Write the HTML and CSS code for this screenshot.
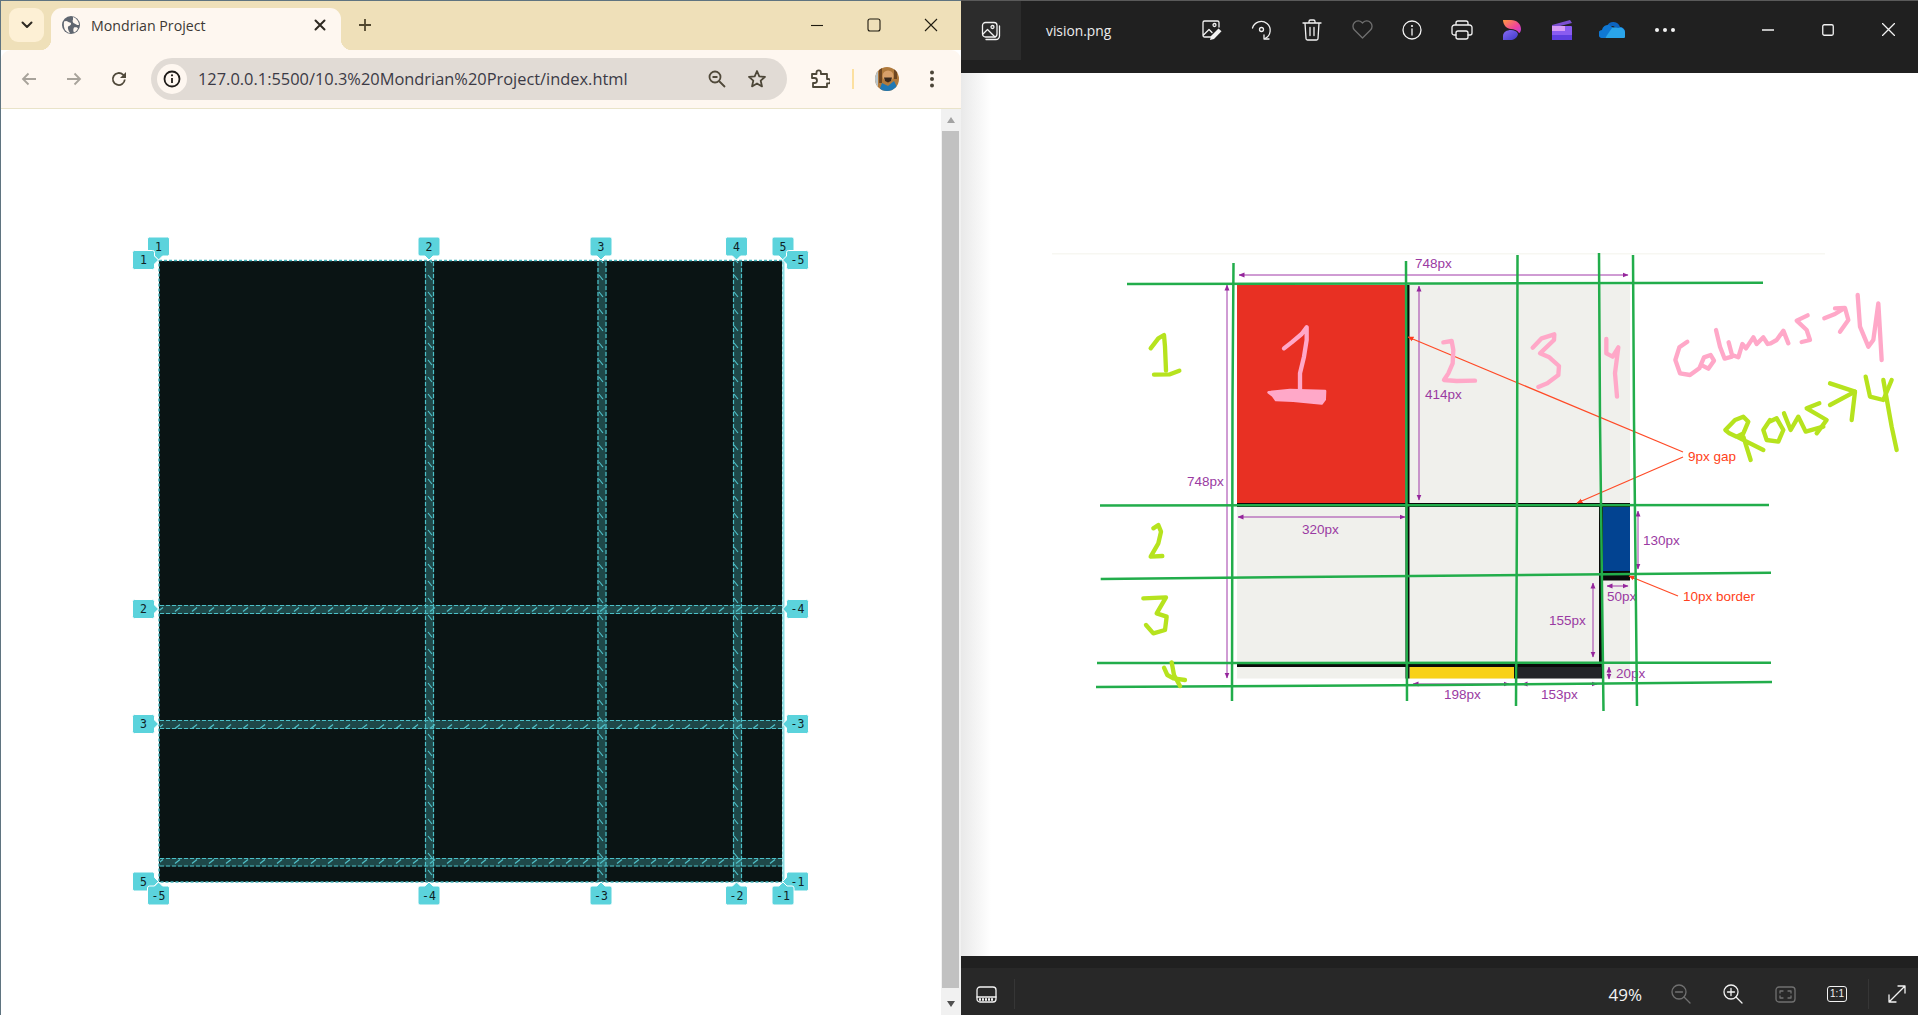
FILE: index.html
```html
<!DOCTYPE html>
<html lang="en">
<head>
<meta charset="utf-8">
<title>Mondrian Project</title>
<link rel="stylesheet" href="styles.css">
</head>
<body>
<div class="screen">

<section class="browser">
  <header class="tabstrip">
    <div class="tab-search"><svg width="12" height="8" viewBox="0 0 12 8"><path class="ic-bold" d="M1.500 1.500 6 6l4.500-4.500"/></svg></div>
    <div class="tab">
      <svg class="favicon" width="18" height="18" viewBox="0 0 18 18"><circle class="globe" cx="9" cy="9" r="9"/><path class="globe-land" d="M2 5.500C5 4 6 6 8 6.500s1 3-1 3.500-1 4 1 7C4 16.500 1 13 2 5.500zM11 1c3 1 6 4 6 8-2 .5-3-1-4.500-1.500S10 5 11 3.500zM12 11.500c2-.5 3.500 0 4 1-1 2-2 3-4 4-1-1.500-1-3.500 0-5z"/></svg>
      <span class="tab-title">Mondrian Project</span>
      <svg class="tab-close" width="12" height="12" viewBox="0 0 12 12"><path class="ic-bold" d="M1.500 1.500l9 9m0-9l-9 9"/></svg>
    </div>
    <svg class="new-tab" width="14" height="14" viewBox="0 0 14 14"><path class="ic-plus" d="M7 1v12M1 7h12"/></svg>
    <div class="caption">
      <div class="caption-btn"><svg width="14" height="14" viewBox="0 0 14 14"><path class="ic-thin" d="M1 7.500h12"/></svg></div>
      <div class="caption-btn"><svg width="14" height="14" viewBox="0 0 14 14"><rect class="ic-thin" x="1" y="1" width="12" height="12" rx="2"/></svg></div>
      <div class="caption-btn"><svg width="14" height="14" viewBox="0 0 14 14"><path class="ic-thin" d="M1 1l12 12m0-12L1 13"/></svg></div>
    </div>
  </header>

  <nav class="toolbar">
    <div class="nav-btn"><svg width="16" height="14" viewBox="0 0 16 14"><path class="ic-nav dim" d="M15 7H2M7.500 1.500 2 7l5.500 5.500"/></svg></div>
    <div class="nav-btn"><svg width="16" height="14" viewBox="0 0 16 14"><path class="ic-nav dim" d="M1 7h13M8.500 1.500 14 7l-5.500 5.500"/></svg></div>
    <div class="nav-btn"><svg width="16" height="16" viewBox="0 0 16 16"><path class="ic-nav" d="M13.800 8.500A6 6 0 1 1 12 3.700L14 5.500"/><path class="ic-solid" d="M15 1v6H9z"/></svg></div>
    <div class="omnibox">
      <div class="site-info"><svg width="18" height="18" viewBox="0 0 18 18"><circle class="ic-info" cx="9" cy="9" r="7.500"/><path class="ic-info" d="M9 8v5"/><circle class="ic-dot" cx="9" cy="5.300" r="1.100"/></svg></div>
      <span class="url">127.0.0.1:5500/10.3%20Mondrian%20Project/index.html</span>
      <div class="omni-actions">
        <div class="omni-btn"><svg width="18" height="18" viewBox="0 0 18 18"><circle class="ic-nav" cx="7" cy="7" r="5.500"/><path class="ic-nav" d="M4.500 7h5M11 11l6 6"/></svg></div>
        <div class="omni-btn"><svg width="20" height="20" viewBox="0 0 20 20"><path class="ic-star" d="M10 2l2.300 5.400 5.700.5-4.300 3.800 1.300 5.700L10 14.400l-5 3 1.300-5.700L2 7.900l5.700-.5z"/></svg></div>
      </div>
    </div>
    <div class="ext-btn"><svg width="20" height="20" viewBox="0 0 20 20"><path class="ic-star" d="M2 5h4.500V3.500a2.200 2.200 0 0 1 4.400 0V5H17v5h1.300a2.200 2.200 0 0 1 0 4.400H17V18H3v-4h1.500a2.500 2.500 0 0 0 0-5H2z"/></svg></div>
    <div class="separator"></div>
    <svg class="avatar" width="24" height="24" viewBox="0 0 24 24"><defs><clipPath id="av"><circle cx="12" cy="12" r="12"/></clipPath></defs><g clip-path="url(#av)"><rect class="av-bg" width="24" height="24"/><rect class="av-side" width="3" height="24"/><rect class="av-stripe" x="4" width="3" height="16"/><rect class="av-stripe" x="19" width="3" height="12"/><circle class="av-face" cx="13" cy="9" r="5.500"/><path class="av-beard" d="M9 10.500h8l-1 3.500-3 1.500-3-1.500z"/><path class="av-shirt" d="M4 24l3-8 6 3 6-5 5 10z"/></g></svg>
    <div class="menu-btn"><svg width="6" height="18" viewBox="0 0 6 18"><circle class="ic-dot2" cx="3" cy="2.500" r="2"/><circle class="ic-dot2" cx="3" cy="9" r="2"/><circle class="ic-dot2" cx="3" cy="15.500" r="2"/></svg></div>
  </nav>

  <div class="viewport">
    <main class="page">
      <svg class="inspector" width="920" height="906" viewBox="1 109 920 906">
        <defs>
          <pattern id="hatch-h" patternUnits="userSpaceOnUse" width="17" height="9" y="605"><path class="hatch" d="M5 6.500 10 2.500"/></pattern>
          <pattern id="hatch-v" patternUnits="userSpaceOnUse" width="9" height="17" x="425"><path class="hatch" d="M3 3 7 8"/></pattern>
          <path id="b-top" d="M-9-9.500H9a2 2 0 0 1 2 2V7.500a2 2 0 0 1-2 2H4L0 13.500-4 9.500H-9a2 2 0 0 1-2-2V-7.500a2 2 0 0 1 2-2Z"/>
          <path id="b-bottom" d="M-9 9.500H9a2 2 0 0 0 2-2V-7.500a2 2 0 0 0-2-2H4L0-13.500-4-9.500H-9a2 2 0 0 0-2 2V7.500a2 2 0 0 0 2 2Z"/>
          <path id="b-left" d="M-11-7.500a2 2 0 0 1 2-2H9a2 2 0 0 1 2 2V-4L15 0 11 4V7.500a2 2 0 0 1-2 2H-9a2 2 0 0 1-2-2Z"/>
          <path id="b-right" d="M11-7.500a2 2 0 0 0-2-2H-9a2 2 0 0 0-2 2V-4L-15 0-11 4V7.500a2 2 0 0 0 2 2H9a2 2 0 0 0 2-2Z"/>
        </defs>
        <rect class="grid-bg" x="159" y="261" width="623" height="621"/>
        <g class="gap-fill">
          <rect x="425" y="261" width="9" height="621"/><rect x="597.500" y="261" width="9" height="621"/><rect x="733" y="261" width="9" height="621"/>
          <rect x="160" y="605" width="622" height="9"/><rect x="160" y="720" width="622" height="9"/><rect x="160" y="858" width="622" height="8.500"/>
        </g>
        <g class="hatch-v">
          <rect x="425" y="261" width="9" height="621"/><rect x="597.500" y="261" width="9" height="621"/><rect x="733" y="261" width="9" height="621"/>
        </g>
        <g class="hatch-h">
          <rect x="160" y="605" width="622" height="9"/><rect x="160" y="720" width="622" height="9"/><rect x="160" y="858" width="622" height="8.500"/>
        </g>
        <path class="gap-edge" d="M425.500 262V881M433.500 262V881M598 262V881M606 262V881M733.500 262V881M741.500 262V881M160 605.500H782M160 613.500H782M160 720.500H782M160 728.500H782M160 858.500H782M160 866H782"/>
        <rect class="grid-border" x="159" y="260.500" width="624" height="621.500"/>
        <path class="grid-border-light" d="M783.500 260V882"/>

        <g class="badge" transform="translate(158.500 246.500)"><use href="#b-top"/><text y="4">1</text></g>
        <g class="badge" transform="translate(429 246.500)"><use href="#b-top"/><text y="4">2</text></g>
        <g class="badge" transform="translate(601 246.500)"><use href="#b-top"/><text y="4">3</text></g>
        <g class="badge" transform="translate(736.500 246.500)"><use href="#b-top"/><text y="4">4</text></g>
        <g class="badge" transform="translate(783 246.500)"><use href="#b-top"/><text y="4">5</text></g>
        <g class="badge" transform="translate(143.500 260)"><use href="#b-left"/><text y="4">1</text></g>
        <g class="badge" transform="translate(143.500 609)"><use href="#b-left"/><text y="4">2</text></g>
        <g class="badge" transform="translate(143.500 724)"><use href="#b-left"/><text y="4">3</text></g>
        <g class="badge" transform="translate(143.500 881.500)"><use href="#b-left"/><text y="4">5</text></g>
        <g class="badge" transform="translate(797.500 260)"><use href="#b-right"/><text y="4">-5</text></g>
        <g class="badge" transform="translate(797.500 609)"><use href="#b-right"/><text y="4">-4</text></g>
        <g class="badge" transform="translate(797.500 724)"><use href="#b-right"/><text y="4">-3</text></g>
        <g class="badge" transform="translate(797.500 881.500)"><use href="#b-right"/><text y="4">-1</text></g>
        <g class="badge" transform="translate(158.500 895.500)"><use href="#b-bottom"/><text y="4">-5</text></g>
        <g class="badge" transform="translate(429 895.500)"><use href="#b-bottom"/><text y="4">-4</text></g>
        <g class="badge" transform="translate(601 895.500)"><use href="#b-bottom"/><text y="4">-3</text></g>
        <g class="badge" transform="translate(736.500 895.500)"><use href="#b-bottom"/><text y="4">-2</text></g>
        <g class="badge" transform="translate(783 895.500)"><use href="#b-bottom"/><text y="4">-1</text></g>
      </svg>
    </main>
    <aside class="scrollbar">
      <div class="arrow-up"></div>
      <div class="thumb"></div>
      <div class="arrow-down"></div>
    </aside>
  </div>
</section>

<section class="photos">
  <header class="ph-top">
    <div class="ph-tile"><svg width="20" height="20" viewBox="0 0 20 20"><rect class="ph-ic" x="1.500" y="1.500" width="14.500" height="14.500" rx="3"/><path class="ph-ic" d="M2 13l4.500-4.500L14 16M18.500 5v10a3.500 3.500 0 0 1-3.500 3.500H5"/><circle class="ph-ic" cx="11.500" cy="6" r="1.500"/></svg></div>
    <span class="ph-name">vision.png</span>
    <div class="ph-btn"><svg width="22" height="22" viewBox="0 0 22 22"><path class="ph-ic" d="M11 18H3.500A1.500 1.500 0 0 1 2 16.500v-13A1.500 1.500 0 0 1 3.500 2h13A1.500 1.500 0 0 1 18 3.500V8M2.500 16 8 10.500l3 3"/><circle class="ph-ic" cx="13.500" cy="6" r="1.500"/><path class="ph-fill" d="M17.500 9.500l3 2.800-7.500 7.700-4 1 1-4z"/></svg></div>
    <div class="ph-btn"><svg width="22" height="22" viewBox="0 0 22 22"><path class="ph-ic" d="M1.500 9A9 9 0 1 1 14 19.500"/><circle class="ph-ic" cx="10.500" cy="10.500" r="2"/><path class="ph-ic" d="M13 16v4h5"/></svg></div>
    <div class="ph-btn"><svg width="20" height="22" viewBox="0 0 20 22"><path class="ph-ic" d="M1 4h18M7 4V2.500A1.500 1.500 0 0 1 8.500 1h3A1.500 1.500 0 0 1 13 2.500V4M3 4l1 15.500A1.500 1.500 0 0 0 5.500 21h9a1.500 1.500 0 0 0 1.500-1.500L17 4M8 8.500v8M12 8.500v8"/></svg></div>
    <div class="ph-btn"><svg width="21" height="19" viewBox="0 0 21 19"><path class="ph-ic dim-ic" d="M10.500 18 2.500 10A5.300 5.300 0 0 1 10 2.500l.5.500.5-.5A5.300 5.300 0 0 1 18.500 10z"/></svg></div>
    <div class="ph-btn"><svg width="20" height="20" viewBox="0 0 20 20"><circle class="ph-ic" cx="10" cy="10" r="9"/><path class="ph-ic" d="M10 9v6"/><circle class="ph-dot" cx="10" cy="6" r="1.100"/></svg></div>
    <div class="ph-btn"><svg width="22" height="20" viewBox="0 0 22 20"><path class="ph-ic" d="M5 5V3a2 2 0 0 1 2-2h8a2 2 0 0 1 2 2v2M5 15H3a2 2 0 0 1-2-2V7.500A2.500 2.500 0 0 1 3.500 5h15A2.500 2.500 0 0 1 21 7.500V13a2 2 0 0 1-2 2h-2"/><rect class="ph-ic" x="5" y="11" width="12" height="8" rx="2"/></svg></div>
    <div class="ph-btn"><svg width="20" height="22" viewBox="0 0 20 22"><defs><linearGradient id="dz1" x1="0" y1="0" x2="1" y2="1"><stop offset="0" stop-color="#ff9a3d"/><stop offset=".6" stop-color="#f0449a"/><stop offset="1" stop-color="#b83ee0"/></linearGradient><linearGradient id="dz2" x1="0" y1="0" x2="1" y2="1"><stop offset="0" stop-color="#8a6cf5"/><stop offset="1" stop-color="#3c39c8"/></linearGradient></defs><path fill="url(#dz1)" d="M1 1h8c6 0 10 4 10 9 0 2-1 4-2 4-2-3-5-4-8-4C5 10 1 6 1 1z"/><path fill="url(#dz2)" d="M1 21v-4c0-4 4-6 8-6 3 0 6 1 7 4-1 4-4 6-8 6z"/></svg></div>
    <div class="ph-btn"><svg width="20" height="20" viewBox="0 0 20 20"><path class="cc-a" d="M0 5 18 0l2 3-20 5z"/><rect class="cc-b" y="6" width="20" height="14" rx="1"/><rect class="cc-c" y="6" width="13" height="5"/><rect class="cc-d" y="15" width="20" height="5"/></svg></div>
    <div class="ph-btn"><svg width="26" height="17" viewBox="0 0 26 17"><path class="od-a" d="M8 5a7 7 0 0 1 13 1 5 5 0 0 1 5 5L14 5z"/><path class="od-b" d="M4 17a4 4 0 0 1-1-8 6 6 0 0 1 7-5l5 3-9 10z"/><path class="od-c" d="M6 17h17a3 3 0 0 0 3-5 5 5 0 0 0-7-5 7 7 0 0 0-6 0z"/></svg></div>
    <div class="ph-btn ph-more"><svg width="20" height="4" viewBox="0 0 20 4"><circle class="ph-dot" cx="2" cy="2" r="2"/><circle class="ph-dot" cx="10" cy="2" r="2"/><circle class="ph-dot" cx="18" cy="2" r="2"/></svg></div>
    <div class="ph-caption">
      <div class="ph-cap-btn"><svg width="12" height="2" viewBox="0 0 12 2"><path class="ph-ic" d="M0 1h12"/></svg></div>
      <div class="ph-cap-btn"><svg width="12" height="12" viewBox="0 0 12 12"><rect class="ph-ic" x=".75" y=".75" width="10.500" height="10.500" rx="1.500"/></svg></div>
      <div class="ph-cap-btn"><svg width="13" height="13" viewBox="0 0 13 13"><path class="ph-ic" d="M.5.5l12 12m0-12-12 12"/></svg></div>
    </div>
  </header>

  <div class="ph-canvas">
    <svg class="drawing" width="957" height="883" viewBox="961 73 957 883">
      <defs>
        <marker id="mp" markerUnits="userSpaceOnUse" markerWidth="6" markerHeight="6" refX="5.500" refY="3" orient="auto-start-reverse"><path class="mk-p" d="M0 .5 6 3 0 5.500z"/></marker>
        <marker id="mr" markerUnits="userSpaceOnUse" markerWidth="6" markerHeight="6" refX="5.500" refY="3" orient="auto"><path class="mk-r" d="M0 .5 6 3 0 5.500z"/></marker>
      </defs>
      <rect class="faint" x="1052" y="253" width="773" height="1.500"/>

      <rect class="m-gray" x="1237" y="285" width="393" height="393.500"/>
      <rect class="m-red" x="1237" y="285" width="168.500" height="218"/>
      <rect class="m-blue" x="1603" y="507" width="27" height="64"/>
      <rect class="m-black" x="1603" y="571" width="27" height="9.500"/>
      <rect class="m-white" x="1630" y="660" width="8" height="20"/>
      <rect class="m-yellow" x="1409.500" y="667" width="104.500" height="11.500"/>
      <rect class="m-dark" x="1518" y="667" width="83" height="11.500"/>
      <rect class="m-black" x="1405.500" y="285" width="4" height="393.500"/>
      <rect class="m-black" x="1237" y="503" width="393" height="4"/>
      <rect class="m-black" x="1599" y="507" width="4" height="160"/>
      <rect class="m-black" x="1237" y="663" width="366" height="4"/>
      <rect class="m-black" x="1514" y="667" width="4" height="11.500"/>
      <rect class="m-black" x="1601" y="667" width="2" height="11.500"/>

      <g class="dim-line">
        <path marker-start="url(#mp)" marker-end="url(#mp)" d="M1239 275H1628"/>
        <path marker-start="url(#mp)" marker-end="url(#mp)" d="M1227 285V678"/>
        <path marker-start="url(#mp)" marker-end="url(#mp)" d="M1419 286V500"/>
        <path marker-start="url(#mp)" marker-end="url(#mp)" d="M1238 517H1405"/>
        <path marker-start="url(#mp)" marker-end="url(#mp)" d="M1413 684H1509"/>
        <path marker-start="url(#mp)" marker-end="url(#mp)" d="M1522 684H1597"/>
        <path marker-start="url(#mp)" marker-end="url(#mp)" d="M1593 583V657"/>
        <path marker-start="url(#mp)" marker-end="url(#mp)" d="M1638 511V569"/>
        <path marker-start="url(#mp)" marker-end="url(#mp)" d="M1607 586H1628"/>
        <path marker-start="url(#mp)" marker-end="url(#mp)" d="M1609 667V679"/>
      </g>
      <g class="dim-text">
        <text x="1415" y="268">748px</text>
        <text x="1187" y="486">748px</text>
        <text x="1425" y="399">414px</text>
        <text x="1302" y="534">320px</text>
        <text x="1444" y="699">198px</text>
        <text x="1541" y="699">153px</text>
        <text x="1549" y="625">155px</text>
        <text x="1643" y="545">130px</text>
        <text x="1607" y="601">50px</text>
        <text x="1616" y="678">20px</text>
      </g>
      <g class="note-line">
        <path marker-end="url(#mr)" d="M1683 452 1408 337"/>
        <path marker-end="url(#mr)" d="M1683 457 1577 503"/>
        <path marker-end="url(#mr)" d="M1678 596 1629 576"/>
      </g>
      <g class="note-text">
        <text x="1688" y="461">9px gap</text>
        <text x="1683" y="601">10px border</text>
      </g>

      <g class="green">
        <path d="M1233.500 263 1232.500 400 1232 701"/>
        <path d="M1406 261 1406.500 500 1407 701"/>
        <path d="M1517.500 255 1517 500 1516 706"/>
        <path d="M1599 253 1600 420 1603.500 711"/>
        <path d="M1633 255 1634 420 1637 706"/>
        <path d="M1127 284 1445 283.500 1763 282.700"/>
        <path d="M1100 505.500 1769 505"/>
        <path d="M1100.700 579 1300 577 1771 572.700"/>
        <path d="M1097 663 1771 662.700"/>
        <path d="M1096 687 1440 685 1772 682"/>
      </g>

      <g transform="translate(1090 240) scale(.33333)">
        <g class="pink">
          <polyline points="582,325 605,307 635,282 650,262 650,300 642,350 630,400 630,455"/>
          <path class="pink-fill" d="M536 457 600 450 705 453 704 478 695 490 610 482 558 480 548 466Z"/>
          <polyline points="1060,307 1085,303 1090,330 1088,370 1075,400 1062,420 1100,423 1155,422"/>
        </g>
        <g class="lime">
          <polyline points="182,325 205,295 222,285 225,320 228,392"/>
          <polyline points="192,404 240,403 268,392"/>
        </g>
      </g>
      <g transform="translate(1490 240) scale(.33333)">
        <g class="pink">
          <polyline points="128,323 155,295 193,283 192,300 150,340 178,352 207,378 205,405 172,430 145,441"/>
          <polyline points="349,297 349,340 368,350 385,322 375,400 381,470"/>
          <polyline points="592,305 568,322 556,360 570,400 600,405 628,385 642,352 662,345 672,362 655,386 636,376"/>
          <polyline points="678,270 690,320 704,356 726,350"/>
          <polyline points="716,307 726,345 745,352 757,312 768,325 790,292 800,312 820,292 833,312 842,310 860,300 880,272 895,310"/>
          <polyline points="953,226 920,242 950,270 960,300 935,306"/>
          <polyline points="1003,235 1035,222 1062,205"/>
          <polyline points="1035,205 1065,204 1075,240 1050,275"/>
          <polyline points="1103,165 1110,260 1135,320 1150,300 1165,190 1175,360"/>
        </g>
        <g class="lime">
          <polyline points="782,660 760,590 740,590 718,580 706,570 735,540 760,530 775,545 760,580 740,590 820,630"/>
          <polyline points="840,540 820,570 830,600 865,605 880,570 860,535 838,545"/>
          <polyline points="882,520 902,570 925,530 947,575 1000,560"/>
          <polyline points="988,490 950,505 1010,540 980,580"/>
          <polyline points="1020,430 1095,455 1020,495"/>
          <polyline points="1095,455 1085,540"/>
          <polyline points="1127,410 1140,470 1180,480 1205,420"/>
          <polyline points="1180,420 1205,560 1220,630"/>
        </g>
      </g>
      <g transform="translate(1090 490) scale(.33333)">
        <g class="lime">
          <polyline points="190,115 205,105 213,125 205,160 182,200 217,198"/>
          <polyline points="160,325 228,322 200,370 230,380 225,420 190,430 168,405"/>
          <polyline points="222,533 232,555 250,565 285,570"/>
          <polyline points="245,517 252,555 270,588"/>
        </g>
      </g>
    </svg>
  </div>

  <footer class="ph-bottom">
    <div class="ph-strip"><svg width="21" height="17" viewBox="0 0 21 17"><rect class="ph-ic" x="1" y="1" width="19" height="15" rx="3"/><path class="ph-ic" d="M1 11h19"/><path class="ph-dash" d="M3 13.500h15"/></svg></div>
    <div class="ph-divider"></div>
    <div class="ph-zoom">
      <span class="ph-pct">49%</span>
      <div class="ph-z-btn"><svg width="20" height="20" viewBox="0 0 20 20"><circle class="ph-ic dim-ic" cx="8" cy="8" r="7"/><path class="ph-ic dim-ic" d="M4.500 8h7M13 13l6 6"/></svg></div>
      <div class="ph-z-btn"><svg width="20" height="20" viewBox="0 0 20 20"><circle class="ph-ic" cx="8" cy="8" r="7"/><path class="ph-ic" d="M4.500 8h7M8 4.500v7M13 13l6 6"/></svg></div>
      <div class="ph-z-btn"><svg width="21" height="17" viewBox="0 0 21 17"><rect class="ph-ic dim-ic" x="1" y="1" width="19" height="15" rx="3"/><path class="ph-ic dim-ic" d="M5 7V5h3M13 5h3v2M16 10v2h-3M8 12H5v-2"/></svg></div>
      <div class="ph-z-btn"><span class="ph-one-text">1:1</span></div>
    </div>
    <div class="ph-divider"></div>
    <div class="ph-expand"><svg width="20" height="20" viewBox="0 0 20 20"><path class="ph-ic" d="M2 18 18 2M11 2h7v7M2 11v7h7"/></svg></div>
  </footer>
</section>
</div>
</body>
</html>
```

FILE: styles.css
```css
* { box-sizing: border-box; }
html, body { margin: 0; padding: 0; background: #fff; }
body { overflow: hidden; font-family: "Noto Sans", "Open Sans", sans-serif; }
svg { display: block; }
.screen { display: flex; width: 1918px; height: 1015px; overflow: hidden; }

/* browser window */
.browser { width: 961px; flex: none; display: flex; flex-direction: column; border-left: 1px solid #5f7480; background: #fff; }
.tabstrip { height: 50px; flex: none; display: flex; background: #efe0b9; border-top: 1px solid #5f7480; padding: 7px 0 0 8px; }
.tab-search { width: 35px; height: 34px; margin-right: 7px; border-radius: 9px; background: #fdf0d5; display: flex; align-items: center; justify-content: center; }
.tab { position: relative; width: 290px; height: 42px; background: #fef7f0; border-radius: 11px 11px 0 0; display: flex; align-items: center; padding: 0 0 8px 11px; }
.tab::before, .tab::after { content: ""; position: absolute; bottom: 0; width: 11px; height: 11px; }
.tab::before { left: -11px; background: radial-gradient(circle at 0 0, transparent 11px, #fef7f0 11.500px); }
.tab::after { right: -11px; background: radial-gradient(circle at 100% 0, transparent 11px, #fef7f0 11.500px); }
.globe { fill: #5f6670; }
.globe-land { fill: #fef7f0; }
.tab-title { margin-left: 11px; font-family: "Open Sans", sans-serif; font-size: 14.200px; color: #3d3935; white-space: nowrap; width: 208px; }
.tab-close { margin-left: 15px; }
.new-tab { margin: 10px 0 0 17px; }
.caption { margin-left: auto; display: flex; padding-right: 2px; }
.caption-btn { width: 57px; height: 34px; display: flex; align-items: center; justify-content: center; }

.ic-bold { fill: none; stroke: #2e2a22; stroke-width: 2; stroke-linecap: round; stroke-linejoin: round; }
.ic-plus { fill: none; stroke: #51472e; stroke-width: 1.800; }
.ic-thin { fill: none; stroke: #1f1b10; stroke-width: 1.100; }
.ic-nav { fill: none; stroke: #50493a; stroke-width: 1.800; }
.ic-nav.dim { stroke: #a8a39b; }
.ic-solid { fill: #50493a; }
.ic-info { fill: none; stroke: #1e1b18; stroke-width: 1.800; }
.ic-dot { fill: #1e1b18; }
.ic-dot2 { fill: #4b4538; }
.ic-star { fill: none; stroke: #4d4738; stroke-width: 1.800; stroke-linejoin: round; }

.toolbar { height: 59px; flex: none; display: flex; align-items: center; padding: 0 0 1px 5px; background: #fef7f0; border-bottom: 1px solid #e9e3c9; border-radius: 10px 10px 0 0; }
.nav-btn { width: 45px; height: 40px; display: flex; align-items: center; justify-content: center; }
.omnibox { width: 636px; height: 42px; margin-left: 10px; border-radius: 21px; background: #e1dbd5; display: flex; align-items: center; padding: 0 10px 0 6px; }
.site-info { width: 30px; height: 30px; border-radius: 50%; background: #fef7f0; display: flex; align-items: center; justify-content: center; flex: none; }
.url { margin-left: 11px; font-family: "Open Sans", sans-serif; font-size: 16.400px; color: #3b3a45; white-space: nowrap; }
.omni-actions { margin-left: auto; display: flex; }
.omni-btn { width: 40px; height: 40px; display: flex; align-items: center; justify-content: center; }
.ext-btn { width: 40px; height: 40px; margin-left: 13px; display: flex; align-items: center; justify-content: center; }
.separator { width: 2px; height: 20px; margin-left: 12px; background: #fce0a0; }
.avatar { margin-left: 21px; }
.av-bg { fill: #b07a3c; }
.av-side { fill: #b9c4c9; }
.av-stripe { fill: #6d4622; }
.av-face { fill: #d8a06a; }
.av-beard { fill: #3a2a1e; }
.av-shirt { fill: #1f78b4; }
.menu-btn { width: 24px; height: 24px; margin-left: 21px; display: flex; align-items: center; justify-content: center; }

.viewport { flex: 1; min-height: 0; display: flex; background: #fff; }
.page { flex: 1; min-width: 0; overflow: hidden; }
.scrollbar { width: 20px; flex: none; background: #f1f1f1; display: flex; flex-direction: column; align-items: stretch; }
.arrow-up, .arrow-down { height: 22px; flex: none; display: flex; align-items: center; justify-content: center; }
.arrow-up::before { content: ""; border: 4.500px solid transparent; border-top: 0; border-bottom: 6px solid #a3a3a3; }
.arrow-down::before { content: ""; border: 4.500px solid transparent; border-bottom: 0; border-top: 6px solid #505050; }
.arrow-down { margin-top: 5px; height: 22px; }
.thumb { flex: 1; background: #c1c1c1; margin: 0 2px 0 1px; }

/* grid inspector */
.grid-bg { fill: #0a1414; }
.gap-fill rect { fill: #4fc4c8; fill-opacity: .3; }
.hatch-h rect { fill: url(#hatch-h); }
.hatch-v rect { fill: url(#hatch-v); }
.hatch { fill: none; stroke: #4fc0c8; stroke-width: 1.200; }
.gap-edge { fill: none; stroke: #4cc0c8; stroke-width: 1.200; stroke-dasharray: 4 2; }
.grid-border { fill: none; stroke: #43b3ba; stroke-width: 1.500; stroke-dasharray: 3 2; }
.grid-border-light { fill: none; stroke: #8ee0e5; stroke-width: 2; }
.badge use { fill: #5bd3dc; stroke: #fff; stroke-width: 1; }
.badge text { font-family: "DejaVu Sans Mono", "Liberation Mono", monospace; font-size: 11.500px; fill: #0f2225; text-anchor: middle; }

/* photos window */
.photos { flex: 1; min-width: 0; display: flex; flex-direction: column; background: #202020; }
.ph-top { height: 73px; flex: none; display: flex; align-items: flex-start; border-top: 1px solid #5a5a5a; background: #202020; }
.ph-tile { width: 60px; height: 59px; flex: none; background: #2c2c2c; display: flex; align-items: center; justify-content: center; }
.ph-name { width: 141px; margin-left: 25px; flex: none; height: 59px; line-height: 60px; font-family: "Open Sans", sans-serif; font-size: 13.800px; color: #ececec; }
.ph-btn { width: 50px; height: 57px; flex: none; display: flex; align-items: center; justify-content: center; }
.ph-more { margin-left: 3px; }
.ph-ic { fill: none; stroke: #f2f2f2; stroke-width: 1.300; stroke-linejoin: round; stroke-linecap: round; }
.ph-ic.dim-ic { stroke: #707070; }
.ph-fill { fill: #f2f2f2; }
.ph-dot { fill: #f2f2f2; }
.cc-a { fill: #7b4fd0; }
.cc-b { fill: #8a5cf0; }
.cc-c { fill: #d79bf5; }
.cc-d { fill: #5f3fe0; }
.od-a { fill: #0c64c0; }
.od-b { fill: #0f78d4; }
.od-c { fill: #2aa4ea; }
.ph-caption { margin-left: auto; display: flex; }
.ph-cap-btn { width: 60px; height: 57px; display: flex; align-items: center; justify-content: center; }

.ph-canvas { flex: 1; min-height: 0; background: linear-gradient(90deg, #e9e9e9, #fff 30px); overflow: hidden; }
.faint { fill: #f7f7f2; }
.m-gray { fill: #f0f0ec; }
.m-red { fill: #e83023; }
.m-blue { fill: #024391; }
.m-black { fill: #0a0a0a; }
.m-white { fill: #fff; }
.m-yellow { fill: #f8d118; }
.m-dark { fill: #232428; }
.dim-line path { fill: none; stroke: #a038a8; stroke-width: 1; }
.mk-p { fill: #95259c; }
.mk-r { fill: #ff3b1e; }
.dim-text text { font-family: "Liberation Sans", Arial, sans-serif; font-size: 13.500px; fill: #9a3aa2; }
.note-line path { fill: none; stroke: #ff4a26; stroke-width: 1.200; }
.note-text text { font-family: "Liberation Sans", Arial, sans-serif; font-size: 13.500px; fill: #ff3f20; }
.green path { fill: none; stroke: #22ad4b; stroke-width: 2.500; }
.pink polyline { fill: none; stroke: #ffa8c8; stroke-width: 13; stroke-linecap: round; stroke-linejoin: round; }
.pink-fill { fill: #ffa8c8; stroke: #ffa8c8; stroke-width: 8; stroke-linejoin: round; }
.lime polyline { fill: none; stroke: #b6e31e; stroke-width: 13; stroke-linecap: round; stroke-linejoin: round; }

.ph-bottom { height: 59px; flex: none; display: flex; align-items: center; border-top: 12px solid #202020; background: #282828; padding-top: 5px; }
.ph-strip { width: 50px; height: 36px; flex: none; display: flex; align-items: center; justify-content: center; }
.ph-dash { fill: none; stroke: #f2f2f2; stroke-width: 2.500; stroke-dasharray: 2 1; }
.ph-divider { width: 1px; height: 30px; background: #363636; flex: none; margin-left: 3px; }
.ph-zoom { margin-left: auto; margin-right: 2px; display: flex; align-items: center; }
.ph-pct { font-family: "Open Sans", sans-serif; font-size: 17px; color: #f2f2f2; margin-right: 13px; }
.ph-z-btn { width: 52px; height: 36px; display: flex; align-items: center; justify-content: center; }
.ph-one-text { width: 20px; height: 16px; border: 1.300px solid #f2f2f2; border-radius: 3px; font-family: "Liberation Sans", sans-serif; font-size: 10px; line-height: 13px; text-align: center; color: #f2f2f2; }
.ph-expand { width: 49px; height: 36px; flex: none; display: flex; align-items: center; justify-content: center; padding-left: 6px; }
```
